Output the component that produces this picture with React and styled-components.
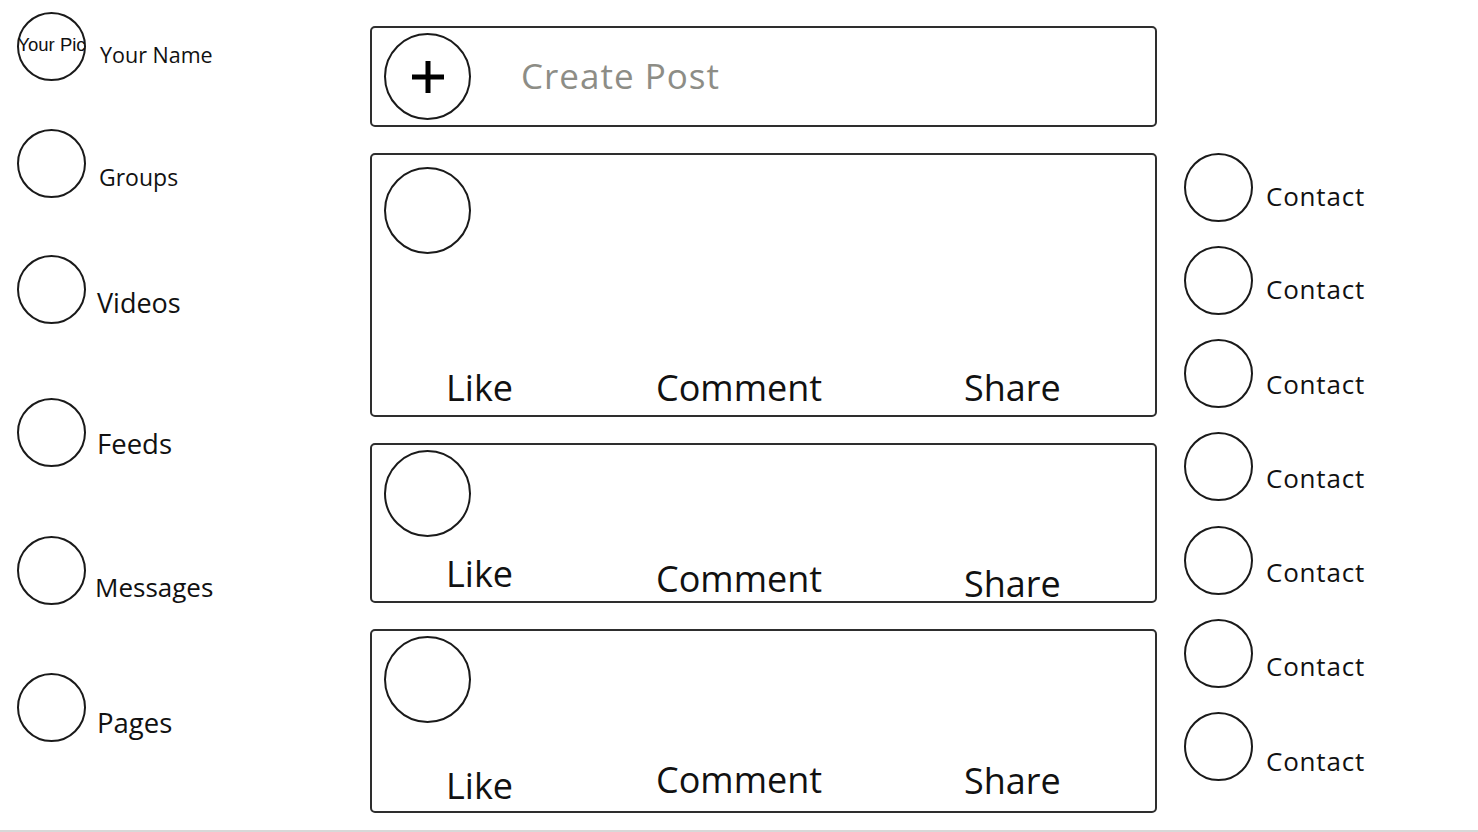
import styled, { createGlobalStyle } from 'styled-components';

const GlobalStyle = createGlobalStyle`
  body {
    margin: 0;
    background: #ffffff;
    font-family: 'Open Sans', 'Noto Sans', sans-serif;
    color: #111111;
  }
`;

const Page = styled.div`
  display: flex;
  box-sizing: border-box;
  width: 1478px;
  height: 832px;
  border-bottom: 2px solid #d8d8d8;
  overflow: hidden;
`;

const Sidebar = styled.nav`
  display: flex;
  flex-direction: column;
  width: 353px;
  padding-left: 17px;
  flex-shrink: 0;
`;

const NavItem = styled.div`
  display: flex;
  align-items: center;
  height: 69px;
  margin-top: ${({ $mt }) => $mt}px;
`;

const Circle = styled.div`
  box-sizing: border-box;
  flex-shrink: 0;
  display: flex;
  align-items: center;
  justify-content: center;
  width: ${({ $size }) => $size}px;
  height: ${({ $size }) => $size}px;
  border: 2px solid #1a1a1a;
  border-radius: 50%;
  background: #fff;
`;

const PicText = styled.span`
  font-family: 'Liberation Sans', Arial, sans-serif;
  font-size: 18.5px;
  white-space: nowrap;
  margin-top: -4px;
`;

const NavLabel = styled.span`
  font-size: ${({ $size }) => $size}px;
  line-height: 1;
  margin-left: ${({ $gap }) => $gap}px;
  margin-top: ${({ $dy }) => $dy * 2}px;
  white-space: nowrap;
`;

const Feed = styled.main`
  display: flex;
  flex-direction: column;
  gap: 26px;
  width: 787px;
  padding-top: 26px;
  flex-shrink: 0;
`;

const Card = styled.section`
  box-sizing: border-box;
  display: flex;
  flex-direction: column;
  height: ${({ $h }) => $h}px;
  padding: ${({ $pt }) => $pt}px 0 0 12px;
  border: 2px solid #2e2e2e;
  border-radius: 5px;
`;

const CreateCard = styled(Card)`
  flex-direction: row;
  align-items: center;
  padding: 0 12px;
`;

const CreateText = styled.span`
  margin-left: 50px;
  font-size: 35px;
  letter-spacing: 1px;
  color: #8d8d86;
  margin-top: -3px;
`;

const Actions = styled.div`
  display: grid;
  grid-template-columns: 210px 308px auto;
  align-items: start;
  margin-top: ${({ $mt }) => $mt}px;
  padding-left: 62px;
`;

const Action = styled.span`
  font-size: 36px;
  line-height: 40px;
  margin-top: ${({ $dy }) => $dy}px;
`;

const Contacts = styled.aside`
  display: flex;
  flex-direction: column;
  gap: 25.3px;
  padding: 153px 0 0 27px;
`;

const ContactRow = styled.div`
  display: flex;
  align-items: center;
  height: 68px;
`;

const ContactLabel = styled.span`
  font-size: 26px;
  letter-spacing: 0.8px;
  line-height: 1;
  margin-left: 13px;
  margin-top: ${({ $dy }) => $dy * 2}px;
`;

function PlusIcon() {
  return (
    <svg width="36" height="36" viewBox="0 0 36 36">
      <path d="M18 2 V34 M2 18 H34" stroke="#000" strokeWidth="5" fill="none" />
    </svg>
  );
}

const navItems = [
  { label: 'Your Name', mt: 12, dy: 8, gap: 14, size: 21.5, pic: true },
  { label: 'Groups', mt: 48, dy: 14, gap: 13, size: 23 },
  { label: 'Videos', mt: 57, dy: 13, gap: 11, size: 27 },
  { label: 'Feeds', mt: 74, dy: 11, gap: 11, size: 27.5 },
  { label: 'Messages', mt: 69, dy: 16, gap: 9, size: 26 },
  { label: 'Pages', mt: 68, dy: 15, gap: 11, size: 27.5 },
];

const posts = [
  { h: 264, pt: 12, mt: 114, dy: [0, 0, 0] },
  { h: 160, pt: 5, mt: 17, dy: [0, 5, 10] },
  { h: 184, pt: 5, mt: 37, dy: [6, 0, 1] },
];

const contactOffsets = [9, 9, 10, 11, 12, 13, 14];

function PostCard({ post }) {
  return (
    <Card $h={post.h} $pt={post.pt}>
      <Circle $size={87} />
      <Actions $mt={post.mt}>
        <Action $dy={post.dy[0]}>Like</Action>
        <Action $dy={post.dy[1]}>Comment</Action>
        <Action $dy={post.dy[2]}>Share</Action>
      </Actions>
    </Card>
  );
}

export default function App() {
  return (
    <>
      <GlobalStyle />
      <Page>
        <Sidebar>
          {navItems.map((item) => (
            <NavItem key={item.label} $mt={item.mt}>
              <Circle $size={69}>{item.pic && <PicText>Your Pic</PicText>}</Circle>
              <NavLabel $size={item.size} $gap={item.gap} $dy={item.dy}>
                {item.label}
              </NavLabel>
            </NavItem>
          ))}
        </Sidebar>
        <Feed>
          <CreateCard $h={101}>
            <Circle $size={87}>
              <PlusIcon />
            </Circle>
            <CreateText>Create Post</CreateText>
          </CreateCard>
          {posts.map((post, i) => (
            <PostCard key={i} post={post} />
          ))}
        </Feed>
        <Contacts>
          {contactOffsets.map((dy, i) => (
            <ContactRow key={i}>
              <Circle $size={69} />
              <ContactLabel $dy={dy}>Contact</ContactLabel>
            </ContactRow>
          ))}
        </Contacts>
      </Page>
    </>
  );
}
